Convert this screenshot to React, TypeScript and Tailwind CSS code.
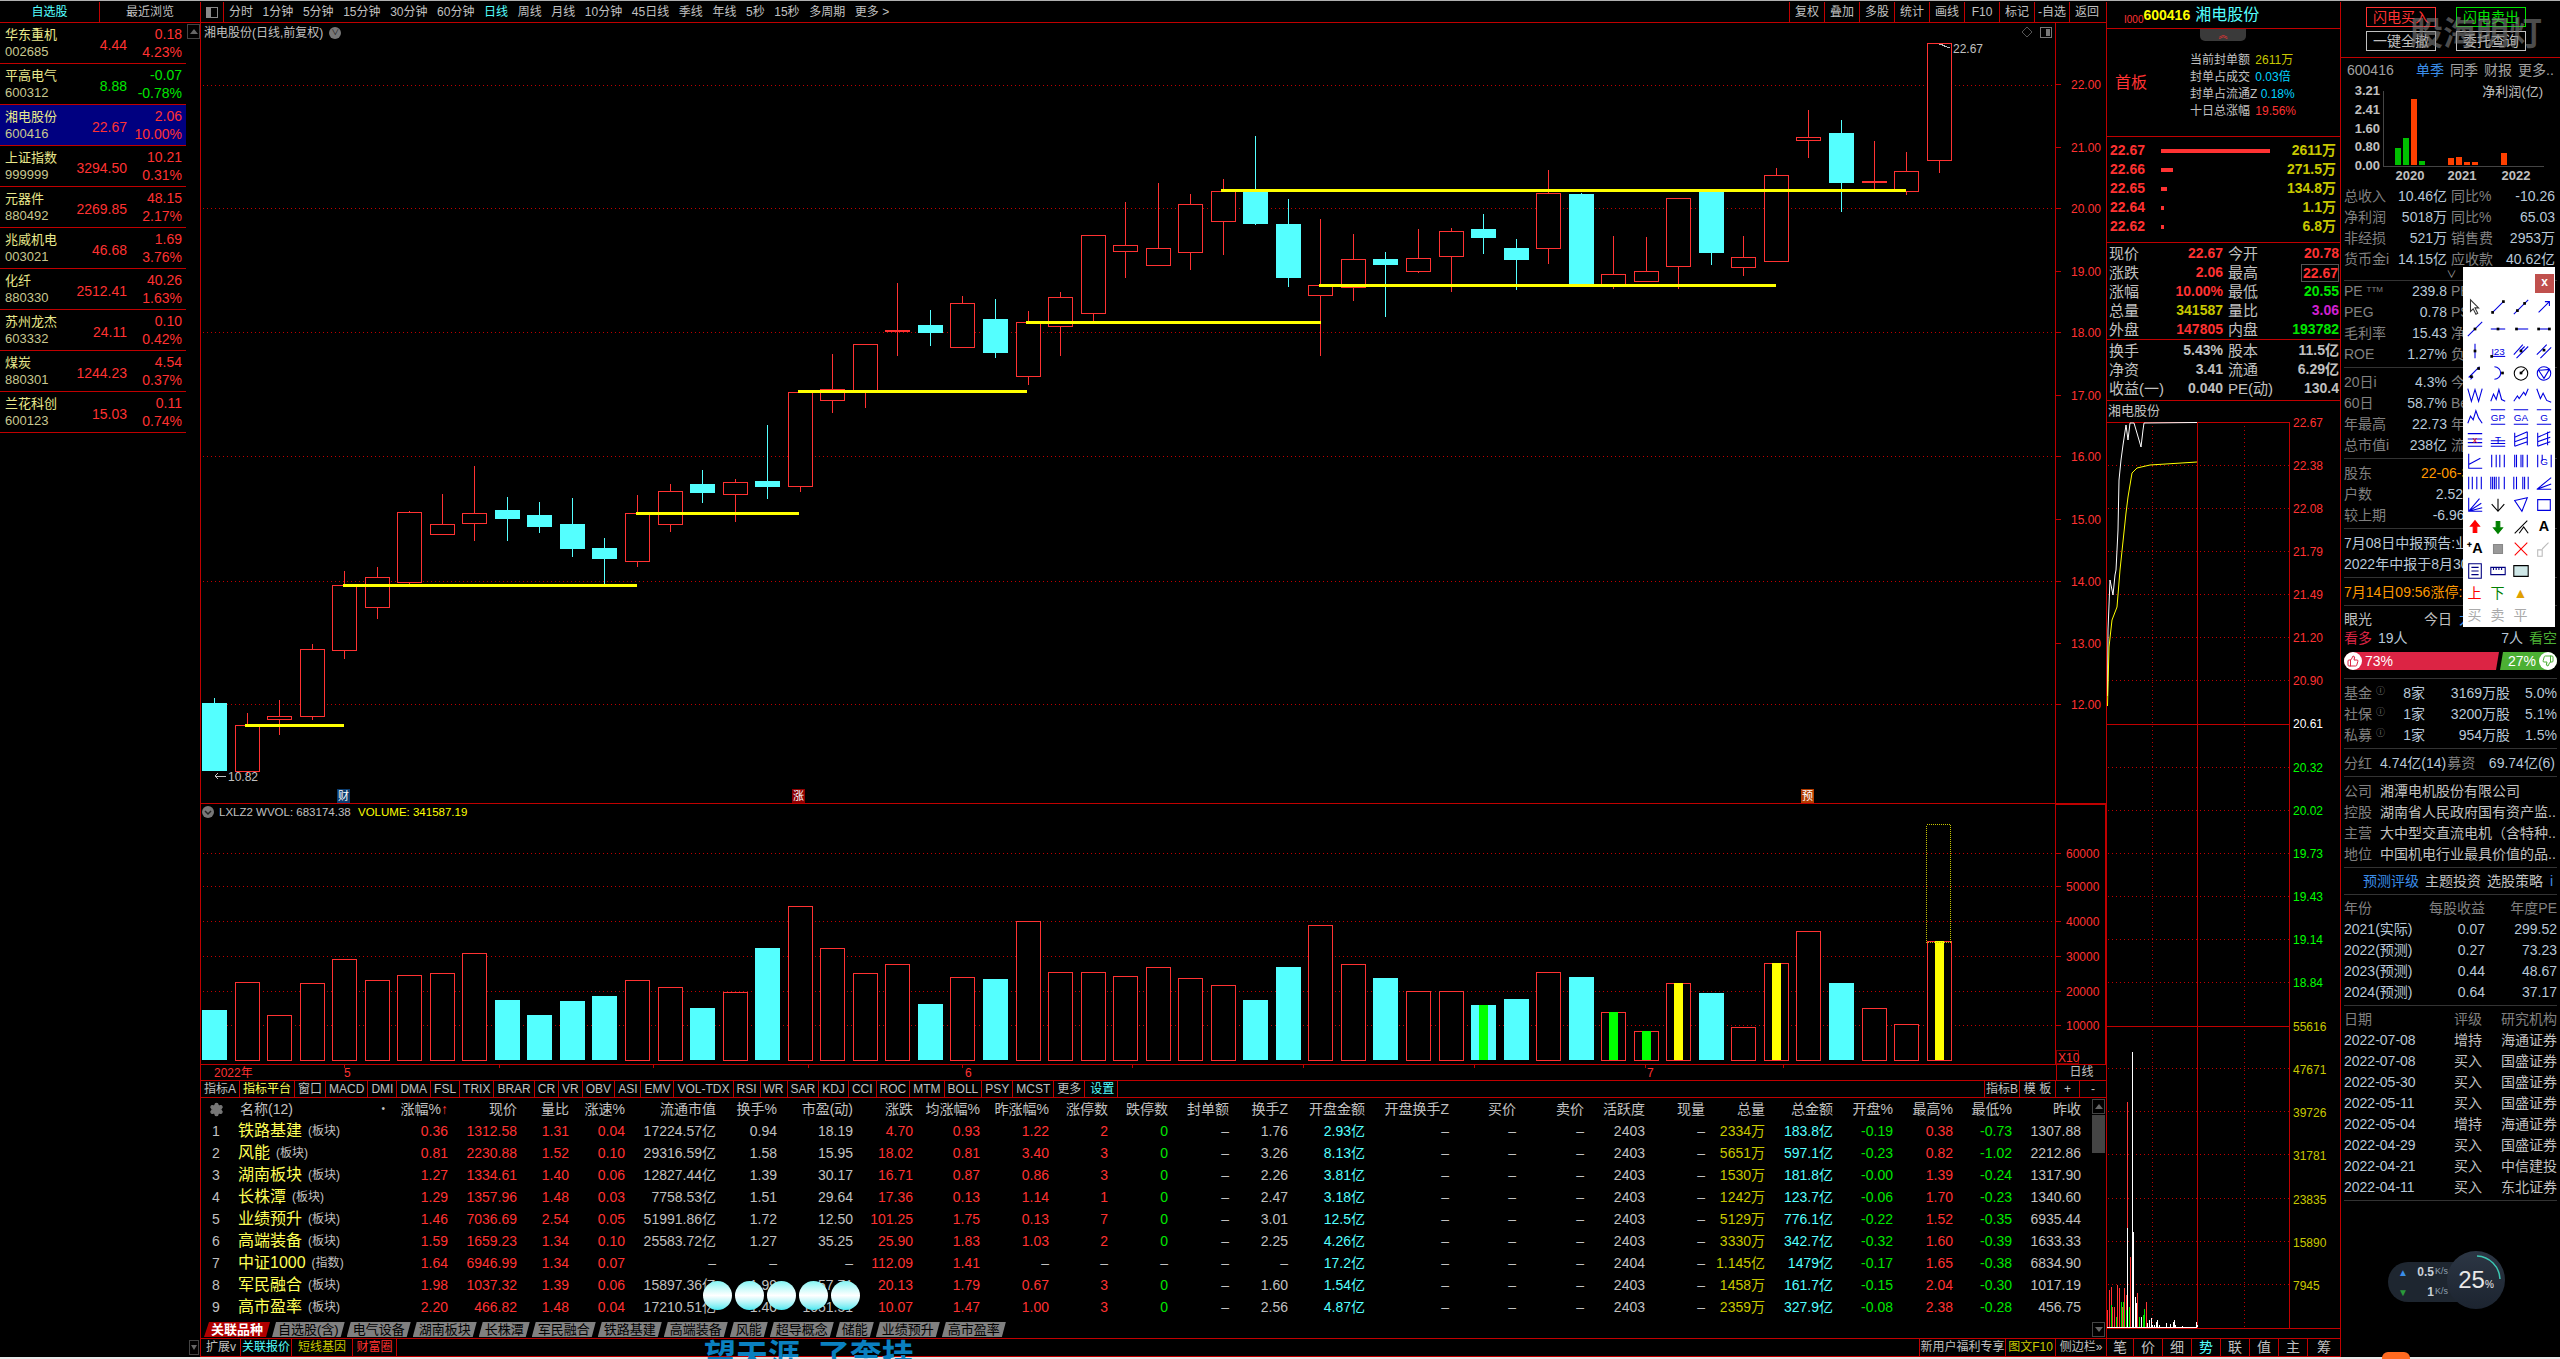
import React from 'react';
import { Settings, ThumbsUp, ThumbsDown } from 'lucide-react';

const RED = '#ff3232';
const LINE = '#c00000';
const CY = '#54ffff';

const list = [
  ['华东重机', '002685', '4.44', '0.18', '4.23%', 'r'],
  ['平高电气', '600312', '8.88', '-0.07', '-0.78%', 'g'],
  ['湘电股份', '600416', '22.67', '2.06', '10.00%', 'r'],
  ['上证指数', '999999', '3294.50', '10.21', '0.31%', 'r'],
  ['元器件', '880492', '2269.85', '48.15', '2.17%', 'r'],
  ['兆威机电', '003021', '46.68', '1.69', '3.76%', 'r'],
  ['化纤', '880330', '2512.41', '40.26', '1.63%', 'r'],
  ['苏州龙杰', '603332', '24.11', '0.10', '0.42%', 'r'],
  ['煤炭', '880301', '1244.23', '4.54', '0.37%', 'r'],
  ['兰花科创', '600123', '15.03', '0.11', '0.74%', 'r'],
];

// [type, high, top, bottom, low] in crop coordinates, converted below
const candles: [string, number, number, number, number][] = [
  ['c', 1363, 1373, 1510, 1510], ['r', 1393, 1418, 1509, 1518], ['r', 1367, 1400, 1405, 1438], ['r', 1254, 1265, 1400, 1408],
  ['r', 1108, 1135, 1267, 1284], ['r', 1100, 1119, 1181, 1205], ['r', 987, 990, 1129, 1133], ['r', 953, 1014, 1034, 1034],
  ['r', 897, 992, 1012, 1048], ['c', 959, 985, 1003, 1048], ['c', 969, 995, 1019, 1032], ['c', 961, 1013, 1063, 1080],
  ['c', 1041, 1061, 1084, 1133], ['r', 955, 992, 1087, 1099], ['r', 932, 946, 1014, 1030], ['c', 905, 933, 951, 971],
  ['r', 922, 928, 952, 1010], ['c', 814, 927, 939, 963], ['r', 746, 747, 936, 948], ['r', 671, 741, 763, 791],
  ['r', 652, 652, 744, 779], ['d', 529, 624, 627, 676], ['c', 583, 613, 629, 656], ['r', 555, 568, 658, 660],
  ['c', 561, 601, 669, 679], ['r', 585, 608, 715, 733], ['r', 547, 556, 616, 676], ['r', 433, 433, 590, 605],
  ['r', 366, 453, 465, 518], ['r', 328, 459, 492, 492], ['r', 350, 369, 467, 502], ['r', 320, 343, 405, 473],
  ['c', 233, 345, 410, 412], ['c', 360, 410, 519, 537], ['r', 400, 532, 552, 676], ['r', 430, 481, 537, 565],
  ['c', 466, 480, 493, 598], ['r', 420, 479, 504, 508], ['r', 418, 425, 475, 546], ['c', 390, 420, 438, 471],
  ['c', 440, 458, 482, 542], ['r', 302, 347, 459, 490], ['c', 348, 350, 530, 530], ['r', 434, 510, 530, 540],
  ['r', 436, 504, 524, 524], ['r', 357, 357, 494, 540], ['c', 345, 345, 468, 492], ['r', 434, 477, 496, 514],
  ['r', 298, 311, 485, 485], ['r', 181, 236, 242, 278], ['c', 201, 227, 328, 385], ['d', 243, 324, 327, 342],
  ['r', 265, 303, 343, 351], ['r', 47, 47, 282, 308],
];
const vols = [960, 877, 976, 880, 808, 871, 856, 850, 790, 930, 975, 933, 918, 871, 892, 954, 907, 774, 649, 775, 850, 823, 942, 862, 867, 694, 847, 847, 859, 832, 865, 886, 930, 831, 706, 823, 864, 904, 904, 945, 927, 847, 861, 967, 1024, 880, 909, 1012, 820, 724, 879, 955, 1003, 754];
const inner: Record<number, string> = { 39: '#00ff00', 43: '#00ff00', 44: '#00ff00', 45: '#ffff00', 48: '#ffff00', 53: '#ffff00' };
const cx = (i: number) => Math.round(214 + i * 32.54);
const cy = (z: number) => Math.round(20 + z / 2.0103);

function MainChart() {
  const grids = [85, 208, 332, 456, 581, 704];
  const ax: [string, number][] = [['22.00', 84], ['21.00', 147], ['20.00', 208], ['19.00', 271], ['18.00', 332], ['17.00', 395], ['16.00', 456], ['15.00', 519], ['14.00', 581], ['13.00', 643], ['12.00', 704]];
  const yel = [[245, 344, 725], [343, 637, 585], [636, 799, 513], [798, 1027, 391], [1026, 1321, 322], [1221, 1906, 190], [1319, 1776, 285]];
  return (
    <svg className="block w-[1906px] h-[780px]" viewBox="201 23 1906 780" shapeRendering="crispEdges">
      {grids.map((y) => <line key={y} x1={203} x2={2055} y1={y + 0.5} y2={y + 0.5} stroke={LINE} strokeDasharray="1 3" />)}
      <line x1={2055.5} x2={2055.5} y1={23} y2={803} stroke={LINE} />
      {ax.map(([t, y]) => (
        <g key={t}>
          <line x1={2056} x2={2061} y1={y + 0.5} y2={y + 0.5} stroke={LINE} />
          <text x={2071} y={y + 5} fontSize={12} fill={RED} shapeRendering="auto" letterSpacing={0}>{t}</text>
        </g>
      ))}
      {candles.map(([t, h, a, b, l], i) => {
        const x = cx(i);
        const col = t === 'c' ? CY : RED;
        return (
          <g key={i}>
            <line x1={x + 0.5} x2={x + 0.5} y1={cy(h)} y2={cy(a)} stroke={col} />
            <line x1={x + 0.5} x2={x + 0.5} y1={cy(b)} y2={cy(l)} stroke={col} />
            {t === 'c' && <rect x={x - 12} y={cy(a)} width={25} height={cy(b) - cy(a)} fill={CY} />}
            {t === 'r' && <rect x={x - 11.5} y={cy(a) + 0.5} width={24} height={Math.max(cy(b) - cy(a), 1)} fill="#000" stroke={RED} />}
            {t === 'd' && <rect x={x - 12} y={cy(a)} width={25} height={2} fill={RED} />}
            {t === 'r' && <line x1={x + 0.5} x2={x + 0.5} y1={cy(h)} y2={cy(a)} stroke={RED} />}
          </g>
        );
      })}
      {yel.map(([a, b, y]) => <rect key={a} x={a} y={y - 1} width={b - a} height={3} fill="#ffff00" />)}
      <text x={228} y={781} fontSize={12} fill="#c0c0c0" shapeRendering="auto">10.82</text>
      <path d="M226 776H215M218 773L215 776L218 779" stroke="#c0c0c0" fill="none" />
      <text x={1953} y={53} fontSize={12} fill="#c0c0c0" shapeRendering="auto">22.67</text>
      <path d="M1939 44L1950 48M1939 44H1943" stroke="#c0c0c0" fill="none" />
      <path d="M2027 27L2032 32L2027 37L2022 32Z" stroke="#555" fill="none" shapeRendering="auto" />
      <rect x={2040.5} y={27.5} width={11} height={10} stroke="#777" fill="#000" strokeWidth={1} />
      <rect x={2046} y={29} width={4} height={7} fill="#777" />
      <rect x={337} y={789} width={13} height={14} fill="#0b3c6e" />
      <text x={338} y={800} fontSize={11} fill="#fff" shapeRendering="auto">财</text>
      <rect x={792} y={789} width={13} height={14} fill="#8c0000" />
      <text x={793} y={800} fontSize={11} fill="#fff" shapeRendering="auto">涨</text>
      <rect x={1801} y={789} width={13} height={14} fill="#b33c00" />
      <text x={1802} y={800} fontSize={11} fill="#fff" shapeRendering="auto">预</text>
    </svg>
  );
}

function VolChart() {
  const ys: [string, number][] = [['60000', 853], ['50000', 886], ['40000', 921], ['30000', 956], ['20000', 991], ['10000', 1025]];
  return (
    <svg className="block w-[1906px] h-[260px]" viewBox="201 804 1906 260" shapeRendering="crispEdges">
      {ys.map(([, y]) => <line key={y} x1={203} x2={2055} y1={y + 0.5} y2={y + 0.5} stroke={LINE} strokeDasharray="1 3" />)}
      <rect x={2055.5} y={804.5} width={50} height={260} fill="#000" stroke={LINE} />
      {ys.map(([t, y]) => (
        <g key={t}>
          <line x1={2056} x2={2061} y1={y + 0.5} y2={y + 0.5} stroke={LINE} />
          <text x={2066} y={y + 5} fontSize={12} fill={RED} shapeRendering="auto">{t}</text>
        </g>
      ))}
      <rect x={2056.5} y={1050.5} width={22} height={13} fill="none" stroke="#800000" />
      <text x={2058} y={1062} fontSize={12} fill={RED} shapeRendering="auto">X10</text>
      {vols.map((z, i) => {
        const x = cx(i);
        const top = Math.round(690 + z / 3);
        const isC = candles[i][0] === 'c';
        return (
          <g key={i}>
            {isC ? <rect x={x - 12} y={top} width={25} height={1060 - top} fill={CY} /> : <rect x={x - 11.5} y={top + 0.5} width={24} height={1060 - top} fill="#000" stroke={RED} />}
            {inner[i] && <rect x={x - 4} y={top} width={9} height={1060 - top} fill={inner[i]} />}
          </g>
        );
      })}
      <rect x={1926.5} y={824.5} width={24} height={118} fill="none" stroke="#c8c800" strokeDasharray="1 1" />
      <circle cx={208} cy={812} r={6} fill="#777" shapeRendering="auto" />
      <path d="M205 811L208 814L211 811" stroke="#222" fill="none" shapeRendering="auto" strokeWidth={1.5} />
      <text x={219} y={816} fontSize={11.5} fill="#c0c0c0" shapeRendering="auto">LXLZ2 WVOL: 683174.38</text>
      <text x={358} y={816} fontSize={11.5} fill="#ffff00" shapeRendering="auto">VOLUME: 341587.19</text>
    </svg>
  );
}

function DateAxis() {
  const ticks = [344, 499, 653, 808, 962, 1132, 1303, 1474, 1645, 1783];
  return (
    <svg className="block w-[1855px] h-[15px]" viewBox="201 1065 1855 15" shapeRendering="crispEdges">
      {ticks.map((x) => <line key={x} x1={x + 0.5} x2={x + 0.5} y1={1065} y2={1068} stroke={LINE} />)}
      <text x={214} y={1077} fontSize={12} fill={RED} shapeRendering="auto">2022年</text>
      <text x={344} y={1077} fontSize={12} fill={RED} shapeRendering="auto">5</text>
      <text x={965} y={1077} fontSize={12} fill={RED} shapeRendering="auto">6</text>
      <text x={1647} y={1077} fontSize={12} fill={RED} shapeRendering="auto">7</text>
    </svg>
  );
}

const tfs = ['分时', '1分钟', '5分钟', '15分钟', '30分钟', '60分钟', '日线', '周线', '月线', '10分钟', '45日线', '季线', '年线', '5秒', '15秒', '多周期', '更多 >'];
const tools = ['复权', '叠加', '多股', '统计', '画线', 'F10', '标记', '-自选', '返回'];
const idx = ['MACD', 'DMI', 'DMA', 'FSL', 'TRIX', 'BRAR', 'CR', 'VR', 'OBV', 'ASI', 'EMV', 'VOL-TDX', 'RSI', 'WR', 'SAR', 'KDJ', 'CCI', 'ROC', 'MTM', 'BOLL', 'PSY', 'MCST', '更多'];
const COLS = 'grid grid-cols-[198px_48px_69px_52px_56px_91px_61px_76px_60px_67px_69px_59px_60px_61px_59px_77px_84px_67px_68px_61px_60px_60px_68px_60px_60px_59px_69px]';
const heads = ['涨幅%', '现价', '量比', '涨速%', '流通市值', '换手%', '市盈(动)', '涨跌', '均涨幅%', '昨涨幅%', '涨停数', '跌停数', '封单额', '换手Z', '开盘金额', '开盘换手Z', '买价', '卖价', '活跃度', '现量', '总量', '总金额', '开盘%', '最高%', '最低%', '昨收'];
const R = 'text-[#ff3232]', G0 = 'text-[#c0c0c0]', GR = 'text-[#00e600]', C0 = 'text-[#54ffff]', Y0 = 'text-[#c8c800]';
const colColor = [R, R, R, R, G0, G0, G0, R, R, R, R, GR, G0, G0, C0, G0, G0, G0, G0, G0, Y0, C0, GR, R, GR, G0];
const d = '–';
const rows: string[][] = [
  ['1', '铁路基建', '板块', '0.36', '1312.58', '1.31', '0.04', '17224.57亿', '0.94', '18.19', '4.70', '0.93', '1.22', '2', '0', d, '1.76', '2.93亿', d, d, d, '2403', d, '2334万', '183.8亿', '-0.19', '0.38', '-0.73', '1307.88'],
  ['2', '风能', '板块', '0.81', '2230.88', '1.52', '0.10', '29316.59亿', '1.58', '15.95', '18.02', '0.81', '3.40', '3', '0', d, '3.26', '8.13亿', d, d, d, '2403', d, '5651万', '597.1亿', '-0.23', '0.82', '-1.02', '2212.86'],
  ['3', '湖南板块', '板块', '1.27', '1334.61', '1.40', '0.06', '12827.44亿', '1.39', '30.17', '16.71', '0.87', '0.86', '3', '0', d, '2.26', '3.81亿', d, d, d, '2403', d, '1530万', '181.8亿', '-0.00', '1.39', '-0.24', '1317.90'],
  ['4', '长株潭', '板块', '1.29', '1357.96', '1.48', '0.03', '7758.53亿', '1.51', '29.64', '17.36', '0.13', '1.14', '1', '0', d, '2.47', '3.18亿', d, d, d, '2403', d, '1242万', '123.7亿', '-0.06', '1.70', '-0.23', '1340.60'],
  ['5', '业绩预升', '板块', '1.46', '7036.69', '2.54', '0.05', '51991.86亿', '1.72', '12.50', '101.25', '1.75', '0.13', '7', '0', d, '3.01', '12.5亿', d, d, d, '2403', d, '5129万', '776.1亿', '-0.22', '1.52', '-0.35', '6935.44'],
  ['6', '高端装备', '板块', '1.59', '1659.23', '1.34', '0.10', '25583.72亿', '1.27', '35.25', '25.90', '1.83', '1.03', '2', '0', d, '2.25', '4.26亿', d, d, d, '2403', d, '3330万', '342.7亿', '-0.32', '1.60', '-0.39', '1633.33'],
  ['7', '中证1000', '指数', '1.64', '6946.99', '1.34', '0.07', d, d, d, '112.09', '1.41', d, d, d, d, d, '17.2亿', d, d, d, '2404', d, '1.145亿', '1479亿', '-0.17', '1.65', '-0.38', '6834.90'],
  ['8', '军民融合', '板块', '1.98', '1037.32', '1.39', '0.06', '15897.36亿', '1.99', '57.71', '20.13', '1.79', '0.67', '3', '0', d, '1.60', '1.54亿', d, d, d, '2403', d, '1458万', '161.7亿', '-0.15', '2.04', '-0.30', '1017.19'],
  ['9', '高市盈率', '板块', '2.20', '466.82', '1.48', '0.04', '17210.51亿', '1.40', '1051.51', '10.07', '1.47', '1.00', '3', '0', d, '2.56', '4.87亿', d, d, d, '2403', d, '2359万', '327.9亿', '-0.08', '2.38', '-0.28', '456.75'],
];
const sheets = ['自选股(含)', '电气设备', '湖南板块', '长株潭', '军民融合', '铁路基建', '高端装备', '风能', '超导概念', '储能', '业绩预升', '高市盈率'];

function LeftList() {
  return (
    <div className="w-[201px] shrink-0 flex flex-col border-r border-[#c00000] relative">
      <div className="h-[21px] flex border-b border-[#c00000] text-[12px] leading-[20px] text-center">
        <div className="w-[100px] text-[#54ffff] border-r border-[#c00000]">自选股</div>
        <div className="flex-1 text-[#c0c0c0]">最近浏览</div>
      </div>
      <div className="flex">
        <div className="w-[186px]">
          {list.map((r, i) => {
            const col = r[5] === 'g' ? 'text-[#00e600]' : 'text-[#ff3232]';
            return (
              <div key={r[1]} className={`h-[41px] border-b border-[#c00000] grid grid-cols-[71px_51px_55px] pl-[5px] ${i === 2 ? 'bg-[#000080]' : ''}`}>
                <div className="pt-[3px] leading-[17px]">
                  <div className="text-[13px] text-[#e8e88c]">{r[0]}</div>
                  <div className="text-[13px] text-[#c8c890]">{r[1]}</div>
                </div>
                <div className={`self-center mt-[5px] text-right text-[14px] ${col}`}>{r[2]}</div>
                <div className={`text-right pt-[2px] text-[14px] leading-[18px] ${col}`}>
                  <div>{r[3]}</div>
                  <div>{r[4]}</div>
                </div>
              </div>
            );
          })}
        </div>
        <div className="ml-[1px] w-[13px] h-[15px] border border-[#444] flex items-center justify-center mt-[1px]">
          <div className="w-0 h-0 border-x-[4px] border-x-transparent border-b-[5px] border-b-[#666]" />
        </div>
      </div>
      <div className="absolute bottom-[2px] right-[1px] w-[10px] h-[15px] border border-[#444] flex items-center justify-center">
        <div className="w-0 h-0 border-x-[3px] border-x-transparent border-t-[5px] border-t-[#666]" />
      </div>
    </div>
  );
}

function Toolbar() {
  return (
    <div className="h-[21px] flex border-b border-[#c00000] text-[12px] leading-[20px] text-[#c0c0c0] whitespace-nowrap">
      <div className="w-[23px] border-r border-[#c00000] flex items-center justify-center">
        <div className="w-[12px] h-[11px] border border-[#888] flex"><div className="w-[4px] bg-[#888]" /></div>
      </div>
      <div className="flex gap-[9.6px] ml-[5px]">
        {tfs.map((t) => <span key={t} className={t === '日线' ? 'text-[#54ffff]' : ''}>{t}</span>)}
      </div>
      <div className="ml-auto flex">
        {tools.map((t) => <div key={t} className="w-[35px] border-l border-[#c00000] text-center">{t}</div>)}
        <div className="w-[2px]" />
      </div>
    </div>
  );
}

function IndexTabs() {
  const Item = ({ t, c }: { t: string; c?: string }) => (
    <div className={`px-[3px] border-r border-[#c00000] ${c || 'text-[#c0c0c0]'}`}>{t}</div>
  );
  return (
    <div className="h-[17px] flex border-b border-[#c00000] text-[12px] leading-[16px] whitespace-nowrap">
      <Item t="指标A" />
      <Item t="指标平台" c="text-[#ffff57]" />
      <Item t="窗口" />
      {idx.map((t) => <Item key={t} t={t} />)}
      <Item t="设置" c="text-[#54ffff] ml-[2px]" />
      <div className="ml-auto flex text-[#c0c0c0]">
        <div className="w-[36px] border-x border-[#c00000] text-center">指标B</div>
        <div className="w-[36px] border-r border-[#c00000] text-center">模 板</div>
        <div className="w-[24px] border-r border-[#c00000] text-center">+</div>
        <div className="w-[26px] text-center">-</div>
      </div>
    </div>
  );
}

function Table() {
  return (
    <div className="h-[241px] border-b border-[#c00000] relative pl-[1px] overflow-hidden whitespace-nowrap">
      <div className={`${COLS} h-[22px] text-[14px] leading-[22px] text-[#c0c0c0] text-right`}>
        <div className="flex items-center text-left">
          <span className="w-[28px] flex justify-center text-[#777]"><Settings size={15} fill="#777" /></span>
          <span className="ml-[10px]">名称(12)</span>
          <span className="ml-auto mr-[15px] text-[10px]">•</span>
        </div>
        {heads.map((h, i) => <div key={h}>{h}{i === 0 && <span className="text-[#ff3232]">↑</span>}</div>)}
      </div>
      {rows.map((r) => (
        <div key={r[0]} className={`${COLS} h-[22px] text-[14px] leading-[22px] text-right`}>
          <div className="flex items-center text-left">
            <span className="w-[28px] text-center text-[#c0c0c0]">{r[0]}</span>
            <span className="ml-[8px] text-[16px] text-[#ffff57]">{r[1]}</span>
            <span className="ml-[6px] text-[12px] text-[#c0c0c0]">({r[2]})</span>
          </div>
          {r.slice(3).map((v, i) => <div key={i} className={v === d ? 'text-[#c0c0c0]' : colColor[i]}>{v}</div>)}
        </div>
      ))}
      <div className="flex gap-[2px] mt-[4px] ml-[2px] text-[13px] leading-[15px] text-black">
        <div className="px-[7px] h-[15px] bg-[#b00000] text-white font-bold [clip-path:polygon(5px_0,100%_0,calc(100%-4px)_100%,0_100%)]">关联品种</div>
        {sheets.map((s) => (
          <div key={s} className="px-[6px] h-[15px] bg-[#808080] [clip-path:polygon(4px_0,100%_0,calc(100%-4px)_100%,0_100%)]">{s}</div>
        ))}
      </div>
      <div className="absolute right-[1px] top-[1px] w-[13px] h-[238px] flex flex-col">
        <div className="h-[15px] border border-[#444] flex items-center justify-center">
          <div className="w-0 h-0 border-x-[4px] border-x-transparent border-b-[5px] border-b-[#666]" />
        </div>
        <div className="h-[38px] mt-[1px] bg-[#444]" />
        <div className="mt-auto h-[15px] border border-[#444] flex items-center justify-center">
          <div className="w-0 h-0 border-x-[4px] border-x-transparent border-t-[5px] border-t-[#666]" />
        </div>
      </div>
    </div>
  );
}

function StatusBar() {
  return (
    <div className="h-[18px] flex border-b border-[#c00000] text-[12px] leading-[17px] whitespace-nowrap">
      <div className="w-[3px]" />
      <div className="w-[37px] pl-[2px] border-r border-[#c00000] text-[#c0c0c0]">扩展v</div>
      <div className="w-[51px] text-center border-r border-[#c00000] text-[#54ffff]">关联报价</div>
      <div className="w-[61px] text-center border-r border-[#c00000] text-[#c8c800]">短线基因</div>
      <div className="w-[44px] text-center border-r border-[#c00000] text-[#ff3232]">财富圈</div>
      <div className="ml-auto flex">
        <div className="w-[87px] text-center border-x border-[#c00000] text-[#c0c0c0]">新用户福利专享</div>
        <div className="w-[50px] text-center border-r border-[#c00000] text-[#c8c800]">图文F10</div>
        <div className="w-[50px] text-center text-[#c0c0c0]">侧边栏»</div>
      </div>
    </div>
  );
}

function Center() {
  return (
    <div className="w-[1906px] shrink-0 border-r border-[#c00000] flex flex-col relative">
      <Toolbar />
      <div className="h-[781px] border-b border-[#c00000] relative">
        <MainChart />
        <div className="absolute left-[3px] top-[1px] flex items-center gap-[6px] h-[18px] text-[12px] text-[#c0c0c0]">
          <span>湘电股份(日线,前复权)</span>
          <span className="w-[12px] h-[12px] rounded-full bg-[#777] flex items-center justify-center text-[8px] leading-none text-[#222]">∨</span>
        </div>
      </div>
      <VolChart />
      <div className="h-[17px] flex border-y border-[#c00000]">
        <DateAxis />
        <div className="flex-1 border-l border-[#c00000] text-[12px] leading-[15px] text-[#c0c0c0] text-center">日线</div>
      </div>
      <IndexTabs />
      <Table />
      <StatusBar />
    </div>
  );
}

function MinuteChart() {
  const dots = [465, 508, 551, 594, 637, 680, 767, 810, 853, 896, 939, 982, 1068, 1111, 1154, 1198, 1241, 1284];
  const labels: [string, number, string][] = [
    ['22.67', 422, RED], ['22.38', 465, RED], ['22.08', 508, RED], ['21.79', 551, RED], ['21.49', 594, RED], ['21.20', 637, RED], ['20.90', 680, RED],
    ['20.61', 723, '#ffffff'], ['20.32', 767, '#00ff00'], ['20.02', 810, '#00ff00'], ['19.73', 853, '#00ff00'], ['19.43', 896, '#00ff00'], ['19.14', 939, '#00ff00'], ['18.84', 982, '#00ff00'],
    ['55616', 1026, '#c8c800'], ['47671', 1069, '#c8c800'], ['39726', 1112, '#c8c800'], ['31781', 1155, '#c8c800'], ['23835', 1199, '#c8c800'], ['15890', 1242, '#c8c800'], ['7945', 1285, '#c8c800'],
  ];
  const vr = [[22, 1260], [27, 1200], [32, 1190], [37, 1250], [42, 1250], [47, 1280], [52, 1185], [57, 1195], [62, 1235], [67, 1250], [72, 1195], [77, 1215], [82, 635], [91, 1100], [112, 1210], [137, 1235]];
  const vg = [[34, 1245], [48, 1280], [64, 1235], [70, 1235], [78, 1260], [88, 1250], [108, 1270], [118, 1280], [128, 1275], [133, 1258]];
  const vw = [[82, 1015], [97, 487], [100, 1025], [104, 1220], [107, 1240], [122, 1280], [142, 1300], [147, 1290], [152, 1285], [157, 1305], [162, 1305], [168, 1295], [172, 1290], [176, 1305], [198, 1300], [210, 1302], [218, 1295], [222, 1290], [226, 1305], [247, 1308], [287, 1295], [292, 1305]];
  const bar = ([x, t]: number[], c: string, k: string) => <rect key={k} x={Math.round(2100 + x / 3)} y={Math.round(890 + t / 3)} width={1} height={1327 - Math.round(890 + t / 3)} fill={c} />;
  return (
    <svg className="block w-[233px] h-[916px] overflow-visible" viewBox="2107 422 233 916">
      <g shapeRendering="crispEdges">
        {dots.map((y) => <line key={y} x1={2108} x2={2289} y1={y + 0.5} y2={y + 0.5} stroke={LINE} strokeDasharray="1 3" />)}
        <line x1={2152.5} x2={2152.5} y1={422} y2={1328} stroke={LINE} strokeDasharray="1 3" />
        <line x1={2244.5} x2={2244.5} y1={422} y2={1328} stroke={LINE} strokeDasharray="1 3" />
        <line x1={2197.5} x2={2197.5} y1={422} y2={1328} stroke={LINE} />
        <line x1={2289.5} x2={2289.5} y1={422} y2={1328} stroke={LINE} />
        <line x1={2107} x2={2289} y1={422.5} y2={422.5} stroke={LINE} />
        <line x1={2107} x2={2289} y1={724.5} y2={724.5} stroke={LINE} />
        <line x1={2107} x2={2289} y1={1026.5} y2={1026.5} stroke={LINE} />
        <line x1={2107} x2={2340} y1={1328.5} y2={1328.5} stroke={LINE} />
        <line x1={2107} x2={2197} y1={1327.5} y2={1327.5} stroke="#fff" />
        {vr.map((b, i) => bar(b, '#ff3232', 'r' + i))}
        {vg.map((b, i) => bar(b, '#00e600', 'g' + i))}
        {vw.map((b, i) => bar(b, '#ffffff', 'w' + i))}
      </g>
      <polyline fill="none" stroke="#fff" strokeWidth={1} points="2107.5,696 2108,630 2110,580 2113,595 2115,575 2116,570 2118,530 2119,480 2121,460 2123,445 2126,425 2128,440 2130,423 2134,423 2139,440 2141,447 2143,430 2144,423 2197,422.5" />
      <polyline fill="none" stroke="#ffff00" strokeWidth={1} points="2107.5,706 2109,647 2112,620 2117,607 2120,570 2126,513 2128,497 2132,473 2137,468 2150,465 2197,462" />
      {labels.map(([t, y, c]) => <text key={t} x={2293} y={y + 5} fontSize={12} fill={c}>{t}</text>)}
    </svg>
  );
}

function Quote({ l, v, vc, l2, v2, c2, box }: { l: string; v: string; vc: string; l2: string; v2: string; c2: string; box?: boolean }) {
  return (
    <div className="h-[19px] grid grid-cols-[33px_81px_auto_1fr] pl-[2px] pr-[1px] items-center leading-[19px] whitespace-nowrap">
      <span className="text-[15px] text-[#c0c0c0]">{l}</span>
      <span className={`text-right text-[14px] font-bold ${vc}`}>{v}</span>
      <span className="text-[15px] text-[#c0c0c0] pl-[5px]">{l2}</span>
      <span className={`text-right text-[14px] font-bold ${c2} ${box ? 'justify-self-end border border-[#555] h-[18px] leading-[16px] w-[38px]' : ''}`}>{v2}</span>
    </div>
  );
}

function PanelA() {
  const bids = [['22.67', 'w-[109px]', '2611万'], ['22.66', 'w-[12px]', '271.5万'], ['22.65', 'w-[6px]', '134.8万'], ['22.64', 'w-[3px]', '1.1万'], ['22.62', 'w-[3px]', '6.8万']];
  const tabs = ['笔', '价', '细', '势', '联', '值', '主', '筹'];
  return (
    <div className="w-[234px] shrink-0 border-r border-[#c00000] flex flex-col whitespace-nowrap">
      <div className="h-[27px] border-b border-[#c00000] flex items-end pl-[17px] pb-[1px]">
        <span className="text-[10px] text-[#ff3232] leading-[14px]">I000</span>
        <span className="text-[14px] font-bold text-[#ffff00] leading-[20px] mb-[2px]">600416</span>
        <span className="ml-[5px] text-[16px] text-[#54ffff] leading-[24px] tracking-[0px]">湘电股份</span>
      </div>
      <div className="h-[108px] border-b border-[#c00000] relative flex">
        <div className="absolute left-[93px] top-0 w-[46px] h-[12px] bg-[#3a3a3a] rounded-b-[5px] flex items-center justify-center text-[9px] leading-none text-[#ff3232]">︽</div>
        <div className="w-[83px] flex items-center pl-[8px] text-[16px] text-[#ff3232]">首板</div>
        <div className="pt-[23px] text-[12px] leading-[17px] text-[#c0c0c0]">
          <div>当前封单额 <span className="ml-[2px] text-[#c8c800]">2611万</span></div>
          <div>封单占成交 <span className="ml-[2px] text-[#00d2ff]">0.03倍</span></div>
          <div>封单占流通Z <span className="text-[#00d2ff]">0.18%</span></div>
          <div>十日总涨幅 <span className="ml-[2px] text-[#ff3232]">19.56%</span></div>
        </div>
      </div>
      <div className="h-[106px] border-b border-[#c00000] pt-[4px]">
        {bids.map(([p, w, v]) => (
          <div key={p} className="h-[19px] grid grid-cols-[51px_1fr_auto] pl-[3px] pr-[4px] items-center text-[14px] font-bold leading-[19px]">
            <span className="text-[#ff3232]">{p}</span>
            <div className={`h-[4px] bg-[#ff3232] ${w}`} />
            <span className="text-[#c8c800]">{v}</span>
          </div>
        ))}
      </div>
      <div className="h-[97px] border-b border-[#c00000] pt-[1px]">
        <Quote l="现价" v="22.67" vc="text-[#ff3232]" l2="今开" v2="20.78" c2="text-[#ff3232]" />
        <Quote l="涨跌" v="2.06" vc="text-[#ff3232]" l2="最高" v2="22.67" c2="text-[#ff3232]" box />
        <Quote l="涨幅" v="10.00%" vc="text-[#ff3232]" l2="最低" v2="20.55" c2="text-[#00e600]" />
        <Quote l="总量" v="341587" vc="text-[#c8c800]" l2="量比" v2="3.06" c2="text-[#d020d0]" />
        <Quote l="外盘" v="147805" vc="text-[#ff3232]" l2="内盘" v2="193782" c2="text-[#00e600]" />
      </div>
      <div className="h-[61px] border-b border-[#c00000] pt-[1px]">
        <Quote l="换手" v="5.43%" vc="text-[#c0c0c0]" l2="股本" v2="11.5亿" c2="text-[#c0c0c0]" />
        <Quote l="净资" v="3.41" vc="text-[#c0c0c0]" l2="流通" v2="6.29亿" c2="text-[#c0c0c0]" />
        <Quote l="收益(一)" v="0.040" vc="text-[#c0c0c0]" l2="PE(动)" v2="130.4" c2="text-[#c0c0c0]" />
      </div>
      <div className="h-[21px] text-[13px] leading-[20px] text-[#c0c0c0] pl-[1px]">湘电股份</div>
      <MinuteChart />
      <div className="h-[19px] flex border-y border-[#c00000] text-[14px] leading-[17px] text-center text-[#c0c0c0]">
        {tabs.map((t, i) => (
          <div key={t} className={`${i === 0 ? 'w-[27px]' : i === 7 ? 'flex-1' : 'w-[29px]'} ${i === 7 ? '' : 'border-r border-[#c00000]'} ${i === 3 ? 'text-[#54ffff]' : ''}`}>{t}</div>
        ))}
      </div>
    </div>
  );
}

const VAL = 'text-[#b8c8d8]';
const LAB = 'text-[#808080]';
function Fin({ a, b, c, e }: { a: React.ReactNode; b: string; c?: string; e?: string }) {
  return (
    <div className="h-[21px] grid grid-cols-[103px_58px_50px] leading-[21px] whitespace-nowrap">
      <div className="flex justify-between"><span className={LAB}>{a}</span><span className={VAL}>{b}</span></div>
      <span className={`${LAB} pl-[4px]`}>{c}</span>
      <span className={`${VAL} text-right`}>{e}</span>
    </div>
  );
}
function Sec({ children, cls }: { children: React.ReactNode; cls: string }) {
  return <div className={`border-b border-[#333] pb-[2px] ${cls}`}>{children}</div>;
}
function Holder({ a, b, c, e }: { a: string; b: string; c: string; e: string }) {
  return (
    <div className="h-[21px] grid grid-cols-[81px_85px_47px] leading-[21px] whitespace-nowrap">
      <div className="flex justify-between"><span className={LAB}>{a} <sup className="text-[9px]">ⓘ</sup></span><span className={VAL}>{b}</span></div>
      <span className={`${VAL} text-right`}>{c}</span>
      <span className={`${VAL} text-right`}>{e}</span>
    </div>
  );
}

function FinChart() {
  const ax: [string, number][] = [['3.21', 89], ['2.41', 108], ['1.60', 127], ['0.80', 145], ['0.00', 164]];
  const bs = [[884, 442, '#00c000'], [908, 410, '#00c000'], [932, 295, '#ff4000'], [956, 481, '#00c000'], [1044, 470, '#ff4000'], [1068, 468, '#ff4000'], [1092, 483, '#ff4000'], [1116, 483, '#ff4000'], [1204, 457, '#ff4000']] as [number, number, string][];
  return (
    <svg className="block w-[219px] h-[105px]" viewBox="2341 80 219 105">
      {ax.map(([t, y]) => <text key={t} x={2380} y={y + 5} textAnchor="end" fontSize={13} fontWeight={700} fill="#c0c0c0">{t}</text>)}
      <g shapeRendering="crispEdges">
        <line x1={2383.5} x2={2383.5} y1={90} y2={165} stroke="#444" />
        <line x1={2383} x2={2544} y1={165.5} y2={165.5} stroke="#444" />
        {bs.map(([x, t, c]) => <rect key={x} x={Math.round(2100 + x / 3)} y={Math.round(t / 3)} width={6} height={164 - Math.round(t / 3)} fill={c} />)}
      </g>
      {[['2020', 2410], ['2021', 2462], ['2022', 2516]].map(([t, x]) => <text key={t} x={x} y={179} textAnchor="middle" fontSize={13} fontWeight={700} fill="#c0c0c0">{t}</text>)}
      <text x={2543} y={95} textAnchor="end" fontSize={13} fill="#c0c0c0">净利润(亿)</text>
    </svg>
  );
}

function PanelB() {
  const yrs = [['2021(实际)', '0.07', '299.52'], ['2022(预测)', '0.27', '73.23'], ['2023(预测)', '0.44', '48.67'], ['2024(预测)', '0.64', '37.17']];
  const rates = [['2022-07-08', '增持', '海通证券'], ['2022-07-08', '买入', '国盛证券'], ['2022-05-30', '买入', '国盛证券'], ['2022-05-11', '买入', '国盛证券'], ['2022-05-04', '增持', '海通证券'], ['2022-04-29', '买入', '国盛证券'], ['2022-04-21', '买入', '中信建投'], ['2022-04-11', '买入', '东北证券']];
  const info = [['公司', '湘潭电机股份有限公司'], ['控股', '湖南省人民政府国有资产监..'], ['主营', '大中型交直流电机（含特种..'], ['地位', '中国机电行业最具价值的品..']];
  return (
    <div className="w-[219px] shrink-0 flex flex-col relative text-[14px] whitespace-nowrap">
      <div className="h-[56px] border-b border-[#c00000] pt-[5px] pl-[25px] relative">
        <div className="grid grid-cols-[70px_70px] gap-x-[20px] gap-y-[4px] text-[14px] leading-[18px] text-center">
          <div className="h-[20px] border border-[#ff3232] text-[#ff3232]">闪电买入</div>
          <div className="h-[20px] border border-[#00e600] text-[#00e600]">闪电卖出</div>
          <div className="h-[20px] border border-[#c0c0c0] text-[#c0c0c0]">一键全撤</div>
          <div className="h-[20px] border border-[#c0c0c0] text-[#c0c0c0]">委托查询</div>
        </div>
        <div className="absolute left-[69px] top-[12px] text-[33px] leading-[40px] font-bold text-[#808080]/60">股海明灯</div>
      </div>
      <div className="h-[23px] flex items-center pl-[6px] text-[14px] leading-[22px] text-[#a0a0a0]">
        <span className="w-[69px]">600416</span>
        <span className="w-[34px] text-[#3b8eea]">单季</span>
        <span className="w-[34px]">同季</span>
        <span className="w-[34px]">财报</span>
        <span>更多..</span>
      </div>
      <FinChart />
      <div className="px-[3px] flex flex-col">
        <Fin a="总收入" b="10.46亿" c="同比%" e="-10.26" />
        <Fin a="净利润" b="5018万" c="同比%" e="65.03" />
        <Fin a="非经损" b="521万" c="销售费" e="2953万" />
        <Fin a="货币金i" b="14.15亿" c="应收款" e="40.62亿" />
        <div className="h-[11px] border-b border-[#333] text-center text-[10px] leading-[10px] text-[#a0a0a0] pl-[2px]">∨</div>
        <Sec cls="">
          <Fin a={<>PE <sup className="text-[8px]">TTM</sup></>} b="239.8" c="PB" />
          <Fin a="PEG" b="0.78" c="PS" />
          <Fin a="毛利率" b="15.43" c="净利率" />
          <Fin a="ROE" b="1.27%" c="负债率" />
          <div className="h-0" />
        </Sec>
        <Sec cls="pt-[4px]">
          <Fin a="20日i" b="4.3%" c="今年" />
          <Fin a="60日" b="58.7%" c="Beta" />
          <Fin a="年最高" b="22.73" c="年最低" />
          <Fin a="总市值i" b="238亿" c="流通" />
        </Sec>
        <Sec cls="pt-[4px]">
          {[['股东', '22-06-30', 'text-[#ff9900]'], ['户数', '2.52万', VAL], ['较上期', '-6.96%', VAL]].map(([a, b, c]) => (
            <div key={a} className="h-[21px] leading-[21px] w-[133px] flex justify-between"><span className={LAB}>{a}</span><span className={c}>{b}</span></div>
          ))}
        </Sec>
        <Sec cls="pt-[4px]">
          <div className={`h-[21px] leading-[21px] overflow-hidden ${VAL}`}>7月08日中报预告:业绩预增</div>
          <div className={`h-[21px] leading-[21px] overflow-hidden ${VAL}`}>2022年中报于8月30日披露</div>
        </Sec>
        <Sec cls="pt-[4px]">
          <div className="h-[21px] leading-[21px] text-[#ff9900] overflow-hidden">7月14日09:56涨停:成交额</div>
        </Sec>
        <div className="h-[73px] border-b border-[#333] pt-[4px]">
          <div className="h-[19px] leading-[19px] flex"><span className="w-[80px] text-[#c0c0c0]">眼光</span><span className="text-[#c0c0c0]">今日</span><span className="ml-[7px] text-[#3b8eea]">大涨</span></div>
          <div className="h-[18px] leading-[18px] flex justify-between">
            <span><span className="text-[#dc2444]">看多</span><span className="ml-[6px] text-[#b8c8d8]">19人</span></span>
            <span><span className="text-[#b8c8d8]">7人</span><span className="ml-[6px] text-[#4cb034]">看空</span></span>
          </div>
          <div className="mt-[5px] h-[18px] flex text-[14px] leading-[18px] text-white">
            <div className="w-[155px] bg-[#dc2444] rounded-l-full flex items-center [clip-path:polygon(0_0,100%_0,calc(100%-3px)_100%,0_100%)]">
              <span className="w-[18px] h-[18px] rounded-full bg-white flex items-center justify-center text-[#dc2444]"><ThumbsUp size={12} /></span>
              <span className="ml-[3px]">73%</span>
            </div>
            <div className="ml-[1px] flex-1 bg-[#4cb034] rounded-r-full flex items-center justify-end [clip-path:polygon(3px_0,100%_0,100%_100%,0_100%)]">
              <span className="mr-[3px]">27%</span>
              <span className="w-[18px] h-[18px] rounded-full bg-white flex items-center justify-center text-[#4cb034]"><ThumbsDown size={12} /></span>
            </div>
          </div>
        </div>
        <Sec cls="pt-[4px]">
          <Holder a="基金" b="8家" c="3169万股" e="5.0%" />
          <Holder a="社保" b="1家" c="3200万股" e="5.1%" />
          <Holder a="私募" b="1家" c="954万股" e="1.5%" />
        </Sec>
        <Sec cls="pt-[4px]">
          <div className="h-[21px] leading-[21px] flex">
            <span className={`w-[36px] ${LAB}`}>分红</span><span className={VAL}>4.74亿(14)</span><span className={`ml-[1px] ${LAB}`}>募资</span><span className={`ml-auto mr-[2px] ${VAL}`}>69.74亿(6)</span>
          </div>
        </Sec>
        <Sec cls="pt-[4px]">
          {info.map(([a, b]) => (
            <div key={a} className="h-[21px] leading-[21px] flex"><span className={`w-[36px] ${LAB}`}>{a}</span><span className="text-[#c0c0c0]">{b}</span></div>
          ))}
        </Sec>
        <div className="h-[27px] border-b border-[#333] pt-[3px] leading-[21px] flex pl-[19px]">
          <span className="w-[62px] text-[#3b8eea]">预测评级</span><span className="w-[62px] text-[#c0c0c0]">主题投资</span><span className="w-[63px] text-[#c0c0c0]">选股策略</span><span className="text-[#3b8eea]">i</span>
        </div>
        <Sec cls="pt-[3px]">
          <div className={`h-[21px] leading-[21px] grid grid-cols-[141px_72px] ${LAB}`}>
            <div className="flex justify-between"><span>年份</span><span>每股收益</span></div><span className="text-right">年度PE</span>
          </div>
          {yrs.map((r) => (
            <div key={r[0]} className={`h-[21px] leading-[21px] grid grid-cols-[141px_72px] ${VAL}`}>
              <div className="flex justify-between"><span>{r[0]}</span><span>{r[1]}</span></div><span className="text-right">{r[2]}</span>
            </div>
          ))}
        </Sec>
        <Sec cls="pt-[3px]">
          <div className={`h-[21px] leading-[21px] grid grid-cols-[138px_75px] ${LAB}`}>
            <div className="flex justify-between"><span>日期</span><span>评级</span></div><span className="text-right">研究机构</span>
          </div>
          {rates.map((r, i) => (
            <div key={i} className="h-[21px] leading-[21px] grid grid-cols-[138px_75px] text-[#c0c0c0]">
              <div className="flex justify-between"><span className={VAL}>{r[0]}</span><span>{r[1]}</span></div><span className="text-right">{r[2]}</span>
            </div>
          ))}
        </Sec>
      </div>
      {/* network speed widget */}
      <div className="absolute left-[47px] top-[1260px] w-[72px] h-[40px] rounded-l-full bg-[#1e2630] pl-[10px] text-[#c8d0d8]">
        <div className="h-[20px] flex items-center"><span className="text-[#3b8eea] text-[10px] w-[14px]">▲</span><span className="w-[22px] text-right text-[12px] font-bold">0.5</span><span className="ml-[1px] text-[9px] text-[#90a0b0]">K/s</span></div>
        <div className="h-[20px] flex items-center"><span className="text-[#2a9a3a] text-[10px] w-[14px]">▼</span><span className="w-[22px] text-right text-[12px] font-bold">1</span><span className="ml-[1px] text-[9px] text-[#90a0b0]">K/s</span></div>
      </div>
      <div className="absolute left-[106px] top-[1249px] w-[58px] h-[58px] rounded-full bg-gradient-to-b from-[#2c3644] to-[#1c2430] flex items-center justify-center text-[#e8e8e8]">
        <svg className="absolute inset-0" width="58" height="58" viewBox="0 0 58 58"><path d="M30 5A24 24 0 0 1 53 28" fill="none" stroke="#3cc8b4" strokeWidth="1.5" /></svg>
        <span className="text-[24px] leading-none font-light">25</span><span className="text-[10px] mt-[8px]">%</span>
      </div>
    </div>
  );
}

const DB = '#0000e0';
type Ic = { p?: string; c?: string; dots?: number[][]; t?: string; tc?: string; fill?: string };
const ic: (Ic | null)[] = [
  { p: 'M5 2V15L8 12L11 18L13 17L10 11H14Z', c: '#333', fill: '#fff' }, { p: 'M4 16L16 4', dots: [[4, 16], [16, 4]] }, { p: 'M2 18L18 2', dots: [[6, 14], [14, 6]] }, { p: 'M4 16L16 4M11 4H16V9' },
  { p: 'M2 18L18 2', dots: [[10, 10]] }, { p: 'M2 10H18', dots: [[10, 10]] }, { p: 'M5 10H18', dots: [[5, 10]] }, { p: 'M4 10H16', dots: [[4, 10], [16, 10]] },
  { p: 'M10 2V18', dots: [[10, 10]] }, { p: 'M3 16H18', t: 'I23', dots: [[3, 16]] }, { p: 'M2 14L12 3M5 18L18 5M9 10L14 5', dots: [[10, 10]] }, { p: 'M2 14L13 3M6 18L18 6', dots: [[10, 9]] },
  { p: 'M3 15L15 3M5 17L8 14', dots: [[14, 5], [6, 14]] }, { p: 'M6 3A7 7 0 1 1 6 17M15 10V10', dots: [[15, 10]] }, { p: 'M10 3A7.5 7.5 0 1 0 10 18A7.5 7.5 0 1 0 10 3M10 10L14 6', c: '#000', dots: [[10, 10]] }, { p: 'M10 3A7.5 7.5 0 1 0 10 18A7.5 7.5 0 1 0 10 3M4 7L16 6L10 16Z' },
  { p: 'M2 3L6 17L10 4L14 17L18 3' }, { p: 'M2 17L5 9L8 15L11 4L14 15L18 17' }, { p: 'M2 17L6 11L8 14L13 7L15 10L18 3' }, { p: 'M2 3L6 14L9 8L13 16L18 18' },
  { p: 'M2 17L5 9L8 13L11 3L14 11L18 17' }, { p: 'M2 2H18M2 18H18', t: 'GP' }, { p: 'M2 2H18M2 18H18', t: 'GA' }, { p: 'M2 2H18M2 18H18', t: 'G' },
  { p: 'M2 4H18M2 10H18M2 14H18M2 18H18', t: 'x', tc: '#d00' }, { p: 'M2 12H18M2 15H18M2 18H18', t: 'T' }, { p: 'M3 3V18M17 2V17M3 8L17 2M3 13L17 8M3 18L17 13' }, { p: 'M3 3V18M14 2V17M3 8L17 2M3 13L17 8M3 18L17 13' },
  { p: 'M3 2V18H18M3 14L16 7' }, { p: 'M3 3V17M8 3V17M12 3V17M17 3V17' }, { p: 'M3 3V17M5 3V17M10 3V17M12 3V17M17 3V17' }, { p: 'M3 3V17M18 3V17M8 3V10', t: 'G' },
  { p: 'M3 3V17M7 3V17M12 3V17M17 3V17' }, { p: 'M2 3V17M4 3V17M6 3V17M8 3V17M11 3V17M17 3V17' }, { p: 'M2 3V17M5 3V17M12 3V17M14 3V17M18 3V17' }, { p: 'M2 17H18M2 17L18 4M2 17L18 11' },
  { p: 'M3 2V17H18M3 17L15 3M3 17L17 8M3 17L18 13' }, { p: 'M10 3V17M3 9L10 17L17 9', c: '#000' }, { p: 'M3 5L17 2L11 17Z' }, { p: 'M3 4H17V16H3Z' },
  { p: 'M10 3L5 9H8V16H12V9H15Z', c: '#ff0000', fill: '#ff0000' }, { p: 'M10 17L5 11H8V4H12V11H15Z', c: '#008000', fill: '#008000' }, { p: 'M3 17L17 3M8 17L13 10L18 17', c: '#000' }, { t: 'A', tc: '#000' },
  { t: '⁺A', tc: '#000' }, { p: 'M5 5H15V15H5Z', c: '#888', fill: '#999' }, { p: 'M3 3L17 17M17 3L3 17', c: '#ff0000' }, { p: 'M3 11H8V18H3ZM8 10L15 3', c: '#bbb' },
  { p: 'M3 2H17V18H3ZM6 6H14M6 10H14M6 14H14', c: '#000080' }, { p: 'M2 6H18V14H2ZM5 6V9M8 6V9M11 6V9M14 6V9', c: '#000080' }, { p: 'M2 4H18V16H2Z', c: '#000', fill: '#cfe8e8' }, null,
];
const popupText = [['上', 'text-[#ff0000]'], ['下', 'text-[#008000]'], ['▲', 'text-[#e0a000]'], ['', ''], ['买', 'text-[#aaa]'], ['卖', 'text-[#aaa]'], ['平', 'text-[#aaa]'], ['', '']];

function Popup() {
  return (
    <div className="absolute left-[2463px] top-[267px] w-[92px] h-[360px] bg-white pt-[29px]">
      <div className="absolute top-[7px] right-[1px] w-[19px] h-[19px] bg-[#c0504d] text-white text-[12px] font-bold leading-[17px] text-center">x</div>
      <div className="grid grid-cols-[23px_23px_23px_23px] auto-rows-[22px]">
        {ic.map((k, i) => (
          <div key={i} className="flex items-center justify-center">
            {k && (
              <svg width="18" height="18" viewBox="0 0 20 20">
                {k.p && <path d={k.p} fill={k.fill || 'none'} stroke={k.c || DB} strokeWidth={1.2} />}
                {k.dots?.map(([x, y]) => <rect key={x + '-' + y} x={x - 1.5} y={y - 1.5} width={3} height={3} fill="#000" />)}
                {k.t && <text x={10} y={14} textAnchor="middle" fontSize={k.tc === '#000' ? 16 : 11} fontWeight={k.tc === '#000' ? 700 : 400} fill={k.tc || DB}>{k.t}</text>}
              </svg>
            )}
          </div>
        ))}
        {popupText.map(([t, c], i) => <div key={i} className={`flex items-center justify-center text-[14px] leading-none ${c}`}>{t}</div>)}
      </div>
    </div>
  );
}

export default function App() {
  return (
    <div className="relative w-[2560px] h-[1359px] overflow-hidden bg-black flex flex-col font-['Liberation_Sans','Noto_Sans_CJK_SC',sans-serif]">
      <div className="h-[1px] bg-[#b0b0b0]" />
      <div className="h-[1px]" />
      <div className="h-[1355px] flex">
        <LeftList />
        <Center />
        <PanelA />
        <PanelB />
      </div>
      <div className="h-[2px] bg-[#e8e8e8]" />
      <Popup />
      {/* floating desktop overlays */}
      <div className="absolute left-[703px] top-[1281px] flex gap-[3px]">
        {[0, 1, 2, 3, 4].map((i) => <div key={i} className="w-[29px] h-[29px] rounded-full bg-gradient-to-b from-[#7ff4f4] via-white to-[#40e8f0]" />)}
      </div>
      <div className="absolute left-[704px] top-[1337px] h-[22px] overflow-hidden text-[32px] leading-[38px] font-bold text-[#0a80c0] whitespace-pre">望天涯  了奎挂</div>
      <div className="absolute left-[2382px] top-[1352px] w-[28px] h-[7px] bg-[#ff6a20] rounded-t-[6px]" />
    </div>
  );
}
